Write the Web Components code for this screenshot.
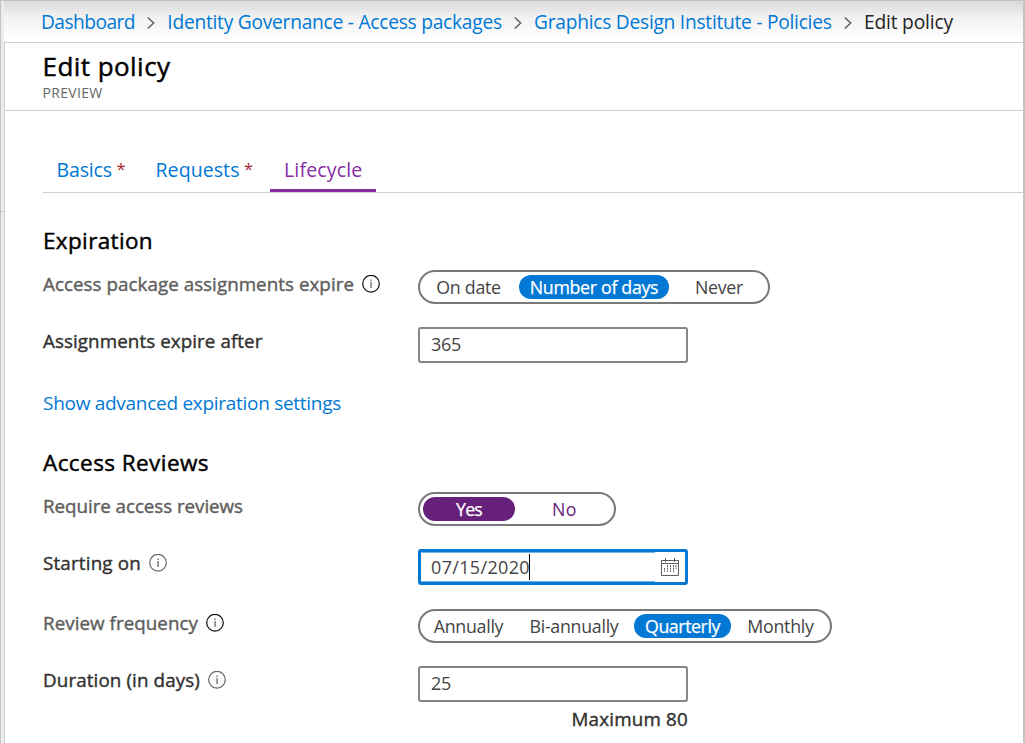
<!DOCTYPE html>
<html lang="en">
<head>
<meta charset="utf-8">
<title>Edit policy</title>
<style>
html,body{margin:0;height:100%;overflow:hidden;background:#fff}
body{font-family:"Open Sans","Noto Sans",sans-serif;color:#323130}
</style>
</head>
<body>
<policy-page></policy-page>
<script>
const define = (name, html, init) => {
  const t = document.createElement('template');
  t.innerHTML = html;
  customElements.define(name, class extends HTMLElement {
    connectedCallback() {
      if (this.shadowRoot) return;
      this.attachShadow({mode: 'open'}).append(t.content.cloneNode(true));
      if (init) init.call(this, this.shadowRoot);
    }
  });
};

/* A single line of text tracked to occupy the advance width given in "w". */
define('fit-text', `<style>
:host{display:inline-block;white-space:pre;flex:none}
span{display:inline-block}
</style><span><slot></slot></span>`, function (root) {
  const w = parseFloat(this.getAttribute('w'));
  const s = root.querySelector('span');
  const n = this.textContent.length;
  s.style.letterSpacing = ((w - s.getBoundingClientRect().width) / n) + 'px';
  this.style.width = w + 'px';
});

define('chevron-icon', `<style>:host{display:block;width:8px;height:12px;flex:none}svg{display:block}</style>
<svg width="8" height="12" viewBox="0 0 8 12" fill="none" stroke="#5c5c5c" stroke-width="1.4"><path d="M.8.5 6.7 6 .8 11.5"/></svg>`);

define('info-icon', `<style>:host{display:block;width:18px;height:18px;flex:none;color:#111}:host([soft]){color:#666}svg{display:block}</style>
<svg width="18" height="18" viewBox="0 0 18 18"><circle cx="9" cy="8.7" r="8.3" fill="none" stroke="currentColor" stroke-width="1.25"/><path d="M8.4 4.5h1.3v1.4H8.4zM8.4 6.9h1.3v6H8.4z" fill="#666"/></svg>`);

define('calendar-icon', `<style>:host{display:block;width:18px;height:18px;flex:none}svg{display:block}</style>
<svg width="18" height="18" viewBox="0 0 18 18" fill="none" stroke="#605e5c"><path d="M.5 2.5h17v15H.5zM.5 5.5h17M4.5 0v4M13.5 0v4"/><path d="M6.5 7v7M9.5 7v7M12.5 7v7M15 7v4M3.5 10v4" stroke-dasharray="2 .6" stroke-width=".9"/></svg>`);

define('bread-crumb', `<style>
:host{display:flex;align-items:center;box-sizing:border-box;height:42px;padding:0 0 0 37px;border-bottom:1px solid #d0d0d0;background:linear-gradient(#dadada,#f2f2f2 40%,#fff 95%);font-size:19.2px;line-height:28px;color:#0078d4}
chevron-icon{margin:2px 12.3px 0 12px}
.now{color:#222}
</style>
<fit-text w="94">Dashboard</fit-text><chevron-icon></chevron-icon><fit-text w="334.5">Identity Governance - Access packages</fit-text><chevron-icon></chevron-icon><fit-text w="297.5">Graphics Design Institute - Policies</fit-text><chevron-icon></chevron-icon><fit-text class="now" w="89">Edit policy</fit-text>`);

define('page-title', `<style>
:host{display:block;box-sizing:border-box;height:68px;padding:5px 0 0 37.5px;border-bottom:1px solid #d0d0d0}
.t{display:block;height:36px;line-height:36px;font-size:26px;-webkit-text-stroke:.45px;color:#000}
.s{display:block;height:20px;margin-top:-1px;line-height:20px;font-size:14px;color:#666}
</style><div class="t"><fit-text w="128">Edit policy</fit-text></div><div class="s"><fit-text w="60">PREVIEW</fit-text></div>`);

define('tab-item', `<style>
:host{display:flex;box-sizing:border-box;height:43px;padding:7px 14px 0 13.5px;font-size:19.6px;line-height:28px;color:#0078d4;border-bottom:3px solid transparent}
:host([active]){color:#8a2da5;border-color:#8a2da5;padding:7px 13px 0 14.5px}
i{font-style:normal;color:#a4262c;font-size:16.5px;line-height:26px;width:11.5px;margin-left:4.5px}
i:empty{display:none}
</style><slot></slot><i></i>`, function (r) {
  if (this.hasAttribute('required')) r.querySelector('i').textContent = '*';
});

define('tab-strip', `<style>:host{display:flex;height:43px;border-bottom:1px solid #d0d0d0}</style><slot></slot>`);

define('section-title', `<style>:host{display:block;height:30px;line-height:30px;font-size:22.5px;-webkit-text-stroke:.45px;color:#000}</style><slot></slot>`);

define('form-row', `<style>
:host{display:grid;grid-template-columns:375px auto;justify-content:start;align-items:start}
.l{display:flex;gap:8px;font-size:18.8px;line-height:28px;color:#323130}
::slotted([slot=label]){-webkit-text-stroke:.4px}
:host([muted]) .l{color:#605e5c}
info-icon{margin-top:5px}
</style><div class="l"><slot name="label"></slot></div><slot></slot>`, function (r) {
  if (this.hasAttribute('info')) {
    const i = document.createElement('info-icon');
    if (!this.hasAttribute('muted')) i.setAttribute('soft', '');
    r.querySelector('.l').append(i);
  }
});

define('option-pill', `<style>
:host{display:flex;justify-content:center;flex:none;box-sizing:border-box;height:24px;border-radius:12px;line-height:24px;color:#444}
:host([selected]){background:#0078d4;color:#fff;-webkit-text-stroke:.25px}
:host([tone=purple]){color:#68217a}
:host([tone=purple][selected]){background:#68217a;color:#fff}
</style><slot></slot>`, function () { this.style.width = this.getAttribute('w') + 'px'; });

define('option-group', `<style>
:host{display:flex;box-sizing:border-box;height:34px;border:2px solid #797979;border-radius:17px;padding:3px;font-size:17.8px}
</style><slot></slot>`, function () { this.style.width = this.getAttribute('w') + 'px'; });

define('text-field', `<style>
:host{display:flex;align-items:center;box-sizing:border-box;width:270px;height:36px;border:2px solid #858585;border-radius:3px;padding:0 11px 2px;font-size:18px;line-height:28px;color:#444}
</style><slot></slot>`);

define('date-field', `<style>
:host{display:flex;box-sizing:border-box;width:270px;height:36px;border:3px solid #0078d4;border-radius:3px;font-size:18px;line-height:28px;color:#444}
.v{display:flex;box-sizing:border-box;width:234px;height:30px;padding:0 0 0 10px;border:solid #71b6eb;border-width:1px 0}
.c{width:1px;height:26px;margin:1px 0 0 -1px;background:#000}
calendar-icon{margin:6px 0 0 6px}
</style><div class="v"><slot></slot><div class="c"></div></div><calendar-icon></calendar-icon>`);

define('policy-page', `<style>
:host{display:grid;grid-template-columns:3px 1fr;box-sizing:border-box;width:1025px;height:743px;border:solid #c3c3c3;border-width:1px 2px 0 1px}
.rail{display:grid;grid-template-rows:210px 1px;background:#ececec}
.rail b{grid-row:2;background:#c8c8c8}
.main{display:flex;flex-direction:column;min-width:0}
.body{flex:1;border-left:1px solid #d0d0d0}
.tabs{margin:38px 0 0 38px}
section{padding-left:38px}
.first{padding-top:33px}
form-row{height:36px}
.link{display:block;height:28px;line-height:28px;font-size:19px;color:#0078d4}
.max{display:block;width:645px;text-align:right;font-size:18.8px;-webkit-text-stroke:.4px;line-height:28px;margin-top:3px}
</style>
<div class="rail"><b></b></div>
<div class="main">
<bread-crumb></bread-crumb>
<div class="body">
<page-title></page-title>
<tab-strip class="tabs">
<tab-item required><fit-text w="55.5">Basics</fit-text></tab-item>
<tab-item required><fit-text w="84">Requests</fit-text></tab-item>
<tab-item active><fit-text w="78.5">Lifecycle</fit-text></tab-item>
</tab-strip>
<section class="first">
<section-title><fit-text w="110">Expiration</fit-text></section-title>
<form-row muted info style="margin-top:14px"><fit-text slot="label" w="311">Access package assignments expire</fit-text>
<option-group w="352"><option-pill w="91"><fit-text w="64.5">On date</fit-text></option-pill><option-pill selected w="150" style="margin-left:5px"><fit-text w="128.5">Number of days</fit-text></option-pill><option-pill w="92" style="margin-left:4px"><fit-text w="48">Never</fit-text></option-pill></option-group></form-row>
<form-row style="margin-top:21px"><fit-text slot="label" w="219.5">Assignments expire after</fit-text><text-field><fit-text w="30">365</fit-text></text-field></form-row>
<div class="link" style="margin-top:26px"><fit-text w="298">Show advanced expiration settings</fit-text></div>
</section>
<section style="padding-top:31px">
<section-title><fit-text w="166">Access Reviews</fit-text></section-title>
<form-row muted style="margin-top:14px"><fit-text slot="label" w="200">Require access reviews</fit-text>
<option-group w="198"><option-pill tone="purple" selected w="92"><fit-text w="26">Yes</fit-text></option-pill><option-pill tone="purple" w="93" style="margin-left:3px"><fit-text w="25">No</fit-text></option-pill></option-group></form-row>
<form-row info style="margin-top:21px"><fit-text slot="label" w="98">Starting on</fit-text><date-field><fit-text w="99">07/15/2020</fit-text></date-field></form-row>
<form-row muted info style="margin-top:24px"><fit-text slot="label" w="155">Review frequency</fit-text>
<option-group w="414"><option-pill w="91"><fit-text w="69.5">Annually</fit-text></option-pill><option-pill w="120"><fit-text w="89">Bi-annually</fit-text></option-pill><option-pill selected w="97"><fit-text w="75">Quarterly</fit-text></option-pill><option-pill w="93" style="margin-left:3px"><fit-text w="66.5">Monthly</fit-text></option-pill></option-group></form-row>
<form-row info style="margin-top:21px"><fit-text slot="label" w="157">Duration (in days)</fit-text><text-field><fit-text w="20">25</fit-text></text-field></form-row>
<div class="max"><fit-text w="116.5">Maximum 80</fit-text></div>
</section>
</div></div>`);
</script>
</body>
</html>
